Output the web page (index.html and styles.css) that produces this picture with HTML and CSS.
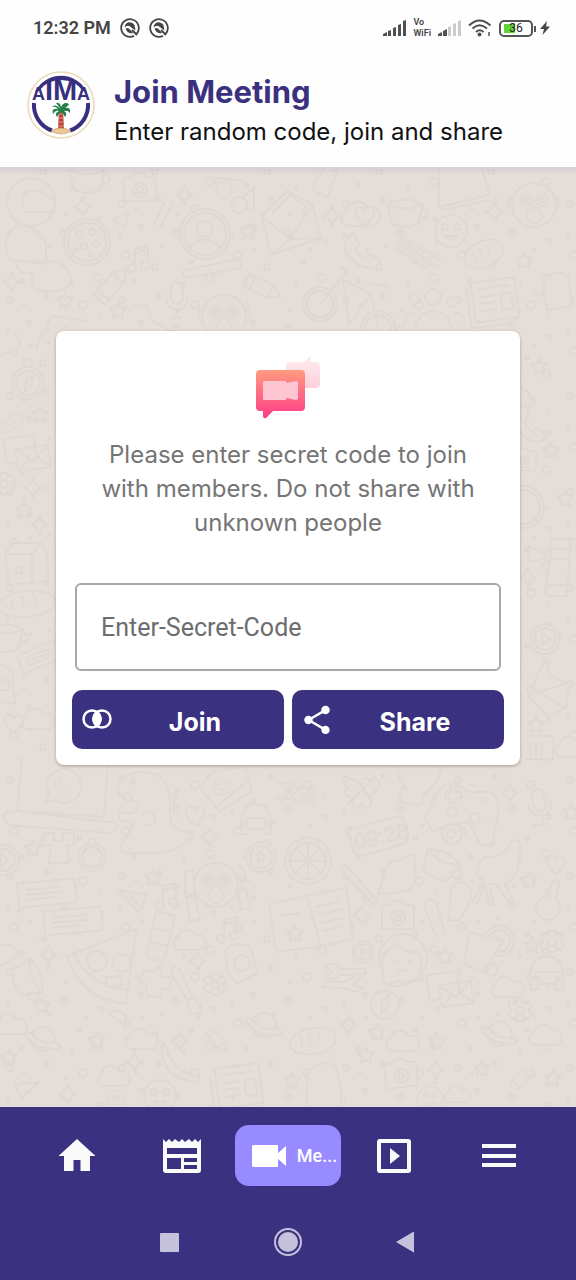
FILE: index.html
```html
<!DOCTYPE html>
<html lang="en">
<head>
<meta charset="utf-8">
<meta name="viewport" content="width=device-width, initial-scale=1">
<title>Join Meeting</title>
<link rel="stylesheet" href="styles.css">
</head>
<body>
<header class="top">
  <div class="status">
    <div class="status-left">
      <span class="clock">12:32 PM</span>
      <svg class="badge" viewBox="0 0 20 20"><path d="M16.5 16A8.800 8.800 0 1 0 14 17.900" fill="none" stroke="#444" stroke-width="1.800"/><path d="M4.500 9.500C5 4 11 2.500 14.500 7L15.500 12.500L12 10Q8 6 4.500 9.500ZM5.500 10.500Q8 9 10 11.500L13 15Q8 16.500 5.500 10.500Z" fill="#444"/><path d="M12 12l5 5" stroke="#444" stroke-width="2"/></svg>
      <svg class="badge" viewBox="0 0 20 20"><path d="M16.5 16A8.800 8.800 0 1 0 14 17.900" fill="none" stroke="#444" stroke-width="1.800"/><path d="M4.500 9.500C5 4 11 2.500 14.500 7L15.500 12.500L12 10Q8 6 4.500 9.500ZM5.500 10.500Q8 9 10 11.500L13 15Q8 16.500 5.500 10.500Z" fill="#444"/><path d="M12 12l5 5" stroke="#444" stroke-width="2"/></svg>
    </div>
    <div class="status-right">
      <svg class="signal" viewBox="0 0 23 16" fill="#505050"><path d="M0 16v-2l4-2v4zM5 16v-5l3-1v6zM10 16V8l3-1v9zM15 16V5l3-1v12zM20 16V1l3-1v16z"/></svg>
      <span class="vowifi"><span>Vo</span><span>WiFi</span></span>
      <svg class="signal" viewBox="0 0 23 16" fill="#505050"><path d="M0 16v-2l4-2v4zM5 16v-5l4-2v7z"/><path fill="#ccc" d="M10 16V7l3-1v10zM15 16V4l3-1v13zM20 16V1l3-1v16z"/></svg>
      <svg class="wifi" viewBox="0 0 24 18" fill="none" stroke="#505050" stroke-width="2"><path d="M1 6.500Q11.500-3.500 22.500 6.500M4.500 9.500Q11.500 3 19 9.500M8 13Q11.500 9.500 15.500 13"/><circle cx="11.500" cy="15.500" r="1" fill="#505050"/><path d="M21 13v4" stroke-width="1.500"/></svg>
      <span class="battery"><span class="level">36</span></span>
      <svg class="bolt" viewBox="0 0 10 14"><path fill="#444" d="M7 0L0 8h4L2.500 14L10 5.500H6z"/></svg>
    </div>
  </div>
  <div class="brand">
    <svg class="logo" viewBox="0 0 68 68" role="img" aria-label="AIMA">
      <circle cx="34" cy="34" r="33" fill="#fff" stroke="#ead9b8" stroke-width="1.500"/>
      <path d="M7 32A27 27 0 0 0 25 59.500M61 32A27 27 0 0 1 43 59.500" fill="none" stroke="#38307f" stroke-width="4"/>
      <path d="M8 21A29 29 0 0 1 60 21L56 20Q48 9 34 9Q20 9 12 20Z" fill="#38307f"/>
      <text class="logo-text" x="34" y="29" text-anchor="middle"><tspan class="logo-small">A</tspan>IM<tspan class="logo-small">A</tspan></text>
      <path d="M32 39h4l1 20h-6z" fill="#b5443c"/>
      <path d="M31 43h5M31 47h5M31 51h5M31 55h6" stroke="#e79a80" stroke-width="1"/>
      <path d="M34 38Q28 32 25 36Q29 35 31 38Q24 37 26 43Q29 38 32 40Q27 42 30 46Q32 42 34 41Q37 43 38 46Q41 42 37 40Q41 39 43 42Q44 36 38 37Q42 34 42 33Q37 30 34 36Q33 31 29 32Z" fill="#23804a"/>
      <path d="M24 60Q34 54 44 60Q34 66 24 60Z" fill="#edc898" stroke="#cc945c" stroke-width=".7"/>
    </svg>
    <div>
      <h1 class="title">Join Meeting</h1>
      <p class="subtitle">Enter random code, join and share</p>
    </div>
  </div>
</header>

<main class="content">
  <svg class="wallpaper" viewBox="0 169 576 938" preserveAspectRatio="xMidYMin slice" aria-hidden="true">
    <defs>
      <pattern id="bits" width="112" height="96" patternUnits="userSpaceOnUse">
        <g class="line">
          <circle cx="10" cy="12" r="3"/><circle cx="47" cy="8" r="2"/><circle cx="83" cy="17" r="4"/><circle cx="29" cy="34" r="2"/><circle cx="64" cy="41" r="3"/><circle cx="101" cy="49" r="2"/><circle cx="14" cy="63" r="4"/><circle cx="43" cy="75" r="3"/><circle cx="79" cy="70" r="2"/><circle cx="98" cy="86" r="4"/><circle cx="22" cy="89" r="2"/>
        </g>
        <g class="dot"><circle cx="24" cy="17" r="2"/><circle cx="66" cy="22" r="2"/><circle cx="99" cy="27" r="2"/><circle cx="8" cy="43" r="2"/><circle cx="49" cy="55" r="2"/><circle cx="87" cy="57" r="2"/><circle cx="31" cy="58" r="2"/><circle cx="72" cy="92" r="2"/></g>
      </pattern>
      <g id="star"><path d="M0-8l2 5 6 1-4 4 1 6-5-3-5 3 1-6-4-4 6-1z"/></g>
      <g id="spark"><path d="M0-10q1 8 8 10q-7 2-8 10q-2-8-9-10q7-3 9-10z"/></g>
      <g id="cloud"><path d="M-12 9a7 7 0 0 1 0-13a9 9 0 0 1 17-2a8 8 0 0 1 6 15z"/></g>
      <g id="planet"><circle r="12"/><path d="M-11-5Q-22-10-17-2Q-4 12 14 10Q22 8 11 3M-11-5Q0 7 11 3"/></g>
      <g id="gear"><circle r="4"/><path d="M-3-11h6l1 4 4-2 4 5-4 3 4 4-4 5-4-2-1 4h-6l-1-4-4 2-4-5 4-4-4-3 4-5 4 2z"/><circle r="4"/></g>
      <g id="camera"><path d="M-16-9q0-2 2-2h6l3-4h9l3 4h7q2 0 2 2v20q0 2-2 2h-28q-2 0-2-2z"/><circle cy="2" r="7"/><circle cy="2" r="3"/></g>
      <g id="mic"><rect x="-6" y="-17" width="12" height="22" rx="6"/><path fill="none" d="M-11-3q0 13 11 13t11-13M0 10v9M-5 19h10"/></g>
      <g id="envelope"><path d="M-18-12h36v25h-36zM-18-12L0 4l18-16M-18 13l13-13M18 13L5 0"/></g>
      <g id="pair"><path d="M-25-20h34v28h-34z"/><use href="#envelope" x="5" y="5"/></g>
      <g id="ring"><circle r="15"/><circle r="11"/><path d="M-3-6l8 6-8 6z"/></g>
      <g id="cookie"><circle r="23"/><circle r="19"/><circle cx="-8" cy="-8" r="3"/><circle cx="5" cy="-10" r="3"/><circle cx="9" cy="2" r="3"/><circle cx="-3" cy="4" r="3"/><circle cx="-11" cy="8" r="2"/><circle cx="4" cy="13" r="2"/></g>
      <g id="face"><circle r="16"/><circle cx="-6" cy="-4" r="3"/><circle cx="6" cy="-4" r="3"/><path d="M-6 5q6 7 12 0z"/></g>
      <g id="monkey"><circle cx="-20" cy="-2" r="6"/><circle cx="20" cy="-2" r="6"/><circle r="22"/><circle cx="-8" cy="-5" r="6"/><circle cx="8" cy="-5" r="6"/><circle cy="10" r="8"/><circle cx="-8" cy="-5" r="2"/><circle cx="8" cy="-5" r="2"/></g>
      <g id="news"><path d="M-22-20h44v40h-44zM-27-14v39h44v-5M-17-13h33M-17-5h18M-17 2h18M-17 9h18M6-5h11v16h-11z"/></g>
      <g id="pencil"><path d="M-18-7h26l12 7-12 7h-26zM-12-7v14M8-7v14"/></g>
      <g id="bubble"><path d="M-29-12h55q3 0 3 3v18q0 3-3 3h-50l-8 5q3-5 3-8zM-21-5h36M-21 0h36M-21 5h28"/></g>
      <g id="phone"><path d="M-12-16q-12 10 2 27q16 15 25 2l-9-8-6 4q-8-6-7-12l4-3-3-12z"/></g>
      <g id="car"><path d="M-15 14v-14q2-16 15-16t15 16v14h-7v-5h-16v5zM-11-2h22"/><circle cx="-10" cy="4" r="2"/><circle cx="10" cy="4" r="2"/></g>
      <g id="bread"><ellipse rx="29" ry="13"/><path d="M-16-6q4 6 0 10M-5-9q4 7 0 12M7-9q4 7 0 12"/></g>
      <g id="cup"><path d="M-17-7q18-9 36 0l-5 20q-13 6-26 0zM-17-7q18 9 36 0M18-3q10 2 3 10h-5"/></g>
      <g id="note"><path fill="none" d="M-5 8v-19l13-3v18M-5-7l13-3"/><circle cx="-8" cy="8" r="4"/><circle cx="5" cy="5" r="4"/></g>
      <g id="brush"><path d="M-3 2L-5-26q0-5 5-8q5 3 5 8l-2 28zM-4 2h8l2 12q-6 9-12 0z"/></g>
      <g id="heart"><path d="M0 9q-14-11-7-17q5-3 7 3q2-6 7-3q7 6-7 17z"/></g>
    </defs>
    <rect class="ground" x="0" y="169" width="576" height="938"/>
    <rect fill="url(#bits)" x="0" y="169" width="576" height="938"/>
    <g class="line">
      <circle cx="31" cy="202" r="24"/><path d="M22 200q2-12 17-9l15 9v12H25zM7 238q6-18 25-10l14 14v22l-35-4q-8-8-4-22zM16 261q0 14 16 12q-2 22 17 18q20 2 22-12q-5-20-27-17z"/>
      <use href="#cup" x="86" y="177"/><use href="#camera" transform="translate(140 188) rotate(-3)"/><use href="#cookie" x="87" y="242"/>
      <path d="M112 220l16-7-3 15zM153 226l12-24M160 228l13-26M217 178l28 3M222 194l-7-14M254 185v24M238 202l16-14"/><circle cx="224" cy="190" r="8"/><circle cx="239" cy="205" r="8"/>
      <circle cx="205" cy="234" r="25"/><circle cx="205" cy="234" r="21"/><circle cx="205" cy="229" r="8"/><path d="M189 248q15-17 32 0"/>
      <path d="M184 270l55-11q5 4 1 9l-53 10q-6-3-3-8zM191 272h2M199 270h2M208 269h2"/>
      <use href="#spark" x="185" y="195"/><use href="#spark" x="83" y="207"/><use href="#star" x="248" y="231"/><use href="#spark" x="12" y="282"/><use href="#note" x="140" y="260"/>
      <use href="#pencil" transform="translate(112 285) rotate(-48) scale(1.100)"/><use href="#pencil" transform="translate(263 288) rotate(25)"/><use href="#mic" x="177" y="299"/><use href="#monkey" x="224" y="317"/><use href="#star" x="118" y="310"/><use href="#star" x="65" y="300"/>
      <path d="M262 216l25-25 25 13 9 34-50 17zM262 216l28 23 22-33M272 214l18-20 17 14M271 255l19-16 31-1M45 330l6-14 36 5M139 308l8-3 5 16 20 11"/>
      <path d="M316 180l11-15 10 7-9 25-16-7zM439 170v37l51-12-8-26M440 205q0 6 9 4l40-9"/>
      <use href="#spark" x="332" y="216"/><use href="#spark" x="495" y="212"/><use href="#cloud" transform="translate(361 215) scale(1.200)"/><use href="#heart" x="365" y="216"/><use href="#cup" x="404" y="211"/><use href="#face" x="451" y="231"/><use href="#monkey" x="534" y="205"/><use href="#phone" transform="translate(363 250) rotate(-10)"/><use href="#bread" transform="translate(484 254) rotate(-25) scale(.7 1)"/><use href="#star" x="524" y="260"/>
      <text class="scribble" transform="translate(393 249) rotate(31)">BFF</text>
      <circle cx="320" cy="304" r="17"/><circle cx="320" cy="304" r="13"/><circle cx="378" cy="328" r="17"/><circle cx="378" cy="328" r="13"/><path fill="none" d="M320 304l27-33-8-5M343 280l28 14-22 31zM371 294l7 34M370 284l18 2"/>
      <use href="#news" transform="translate(495 300) rotate(-8)"/><circle cx="433" cy="297" r="8"/><circle cx="414" cy="299" r="5"/><circle cx="452" cy="302" r="5"/><path d="M415 330q3-19 18-19t19 19M405 325q-2-13 10-12M464 325q2-13-10-12"/><path d="M546 278q10-9 22-2l4 30-25 4-4-24zM533 292l12 5"/>
      <circle cx="28" cy="383" r="16"/><circle cx="28" cy="383" r="12"/><path d="M25 391l1-11 7-5-2 11zM24 366v-7h8v7M0 355q20-6 20-10t-5-12M37 350q0-16 12-20"/><use href="#star" x="40" y="414"/><use href="#bread" transform="translate(10 424) rotate(-35) scale(.5)"/><use href="#pair" transform="translate(28 454) rotate(-8) scale(.9)"/><use href="#gear" x="4" y="484"/><use href="#spark" x="33" y="488"/><use href="#star" x="24" y="510"/><use href="#spark" x="40" y="525"/>
      <path d="M5 554l8-11h28l6 12 1 26-39 4zM5 554h27l9-11M32 554v29M16 567h6v6h-6z"/><use href="#bread" transform="translate(27 604) rotate(-6)"/><use href="#cup" x="4" y="636"/><use href="#bubble" transform="translate(42 656) rotate(-22) scale(.8)"/><path d="M0 665l12 5 3 34-15-2M2 680h7v10h-7"/><use href="#cloud" x="38" y="720"/><use href="#heart" x="14" y="724"/>
      <use href="#star" x="539" y="366"/><circle cx="519" cy="400" r="12"/><use href="#phone" x="532" y="423"/><use href="#camera" transform="translate(523 460) scale(.8)"/><use href="#star" x="551" y="450"/><use href="#star" x="565" y="498"/><circle cx="523" cy="507" r="21"/><circle cx="523" cy="507" r="17"/><path d="M551 539h19v11l-3 46h-19l-3-3 6-43zM551 549h18M550 559h17M548 585h18M528 546l16 7 8-8-8 14-15 3z"/><use href="#spark" x="528" y="578"/><use href="#ring" x="545" y="639"/><path d="M538 673l8-12 4 15 18 8-1 22-18 11-20-20zM530 695l37-12M534 688l30 20"/><use href="#star" x="536" y="724"/><path d="M524 736h29v23h-29M530 742v14M536 742v14M542 742v14"/><use href="#cloud" x="572" y="748"/>
      <path d="M22 758l-5 53 87 6 4-54M17 811L2 814l6 11 102 8q9-2 6-10z"/><circle cx="64" cy="786" r="17"/><path d="M51 793l-5 9 11-2"/><use href="#phone" transform="translate(63 785) scale(.5)"/>
      <path d="M119 795q-5-18 18-23q35-2 33 33q-3 30 22 27q-9 23-44 21h-24q-7-8 2-15l8-15-15-3v-7h15l5-9zM173 786l4 5-4 4 4 4-4 4 4 4-4 4 5 7M141 815q8-7 13 1t-10 10"/><circle cx="128" cy="797" r="4"/><circle cx="133" cy="782" r="2"/>
      <path d="M200 787l13-16 32-4 7 24-33 21zM214 808l35-28"/><use href="#face" transform="translate(222 786) scale(.55)"/><use href="#heart" x="195" y="816"/><use href="#car" x="256" y="820"/><use href="#ring" x="261" y="857"/><use href="#ring" x="4" y="860"/><use href="#star" x="33" y="848"/><path d="M44 833h10v8h9v-8h11v12h-7l2 18H49l2-18h-7z"/><circle cx="92" cy="857" r="14"/><circle cx="92" cy="857" r="10"/><circle cx="92" cy="842" r="4"/>
      <use href="#bubble" transform="translate(47 893) rotate(-5)"/><use href="#bubble" transform="translate(73 921) rotate(-5)"/><path d="M119 890l28 5-8 18zM129 894l10 12"/><use href="#star" x="153" y="877"/><use href="#spark" x="210" y="837"/><use href="#monkey" x="216" y="885"/><path d="M185 871h8l2 25-10-2zM186 897h9l5 22-10 2zM238 864q8 5 7 18l-8-7M238 893l7-6 6 21-10 1z"/>
      <path d="M67 956l69-27-10 74q-45-2-59-47zM74 954q16 32 52 36"/><circle cx="97" cy="961" r="10"/><circle cx="122" cy="963" r="9"/><path d="M106 977l15-1v10h-15zM156 911l19 5-10 42q-10 6-18-2zM153 928l18 4M150 942l18 4"/><use href="#cloud" x="190" y="941"/><use href="#note" x="168" y="897"/><use href="#note" x="229" y="931"/><path d="M144 971h10l2-4q10 3 4 10h10v12h-9l-1 8-13-1-1-12-8-2z"/><use href="#brush" transform="translate(189 997) rotate(-28)"/><use href="#spark" x="198" y="961"/><use href="#gear" x="215" y="985"/><path d="M225 951q8-11 25-4l8 26-21 11-9-12z"/><circle cx="242" cy="963" r="8"/><use href="#spark" x="49" y="955"/><use href="#cup" transform="translate(29 977) rotate(70)"/><path d="M0 945q20-1 16 12L0 966"/>
      <use href="#star" x="42" y="1005"/><use href="#cloud" x="11" y="1025"/><use href="#planet" x="43" y="1039"/><use href="#star" x="97" y="1040"/><use href="#cloud" x="142" y="1040"/><use href="#star" x="9" y="1057"/><use href="#spark" x="135" y="1062"/><use href="#spark" x="180" y="1041"/><use href="#cloud" x="114" y="1077"/><path d="M162 1042q-3 37 35 40l2-5q-27-5-33-31zM15 1084l24-2-18 16zM111 1016q4-12 15 0v10z"/><use href="#face" x="160" y="1096"/><use href="#spark" x="68" y="1094"/><use href="#news" transform="translate(239 1086) rotate(-8)"/><use href="#planet" x="264" y="1025"/><use href="#pencil" transform="translate(218 1040) rotate(50) scale(.7)"/><use href="#camera" transform="translate(116 1098) scale(.5)"/>
      <text class="scribble" transform="translate(276 798) rotate(12)">文A</text><use href="#heart" x="370" y="787"/><use href="#heart" transform="translate(354 788) rotate(-90)"/><use href="#heart" transform="translate(362 799) rotate(180)"/><path d="M347 805l20-20M397 762q0 17 9 26l-6 2v12l22 3 2-11q18-12 16-29"/>
      <path d="M425 819q6-20 19-34 12-5 24 7h22q9 3 8 20l-5 29q-12 11-17-5t-15-13q-18 3-28 9zM446 792h5v-5h5v5h5v6h-5v5h-6v-5h-5z"/><circle cx="475" cy="818" r="5"/><circle cx="483" cy="800" r="2"/><circle cx="452" cy="812" r="5"/>
      <path d="M349 833q0-4 5-5l42-11q8 0 10 7l2 13q0 5-5 7l-38 11q-11 1-12-5z"/><text class="clock-doodle" transform="translate(356 850) rotate(-13)">09:28</text>
      <circle cx="308" cy="861" r="23"/><circle cx="308" cy="861" r="18"/><path d="M308 843v36M290 861h36M295 848l26 26M321 848l-26 26"/><path d="M340 869l34 36 3-4-32-37z"/><circle cx="400" cy="876" r="16"/><path d="M387 866l-6 19-3 9 20-1M400 860l15-6v20"/><use href="#cup" transform="translate(440 863) rotate(25)"/><circle cx="452" cy="834" r="10"/><circle cx="451" cy="834" r="4"/><path d="M477 875q2-21 14-18 14 0 20-15 10-6 9 6l-2 20q-3 12-13 15l8 18-3 3-14-20h-6l3 21h-4l-5-22-6 20-5-1 10-21z"/><use href="#mic" transform="translate(540 806) rotate(-10)"/><use href="#star" x="571" y="812"/><use href="#spark" x="510" y="793"/><use href="#star" x="529" y="880"/><use href="#heart" x="556" y="865"/><circle cx="548" cy="908" r="12"/><path d="M547 898l6-17 7 1-5 19"/>
      <path d="M269 904l38-8 39-8 7 51-34 8-43 5zM307 896l14 51M316 907l24-6M317 915l25-6M319 923l24-5M323 931l17-4M280 915l20-2"/><use href="#star" x="295" y="933"/><use href="#camera" x="398" y="916"/><use href="#spark" x="362" y="915"/><path d="M424 905q3-9 12-3l9 31q-4 6-10 1zM450 904q-2-21 12-22 14 4 7 22l-9 16h-11z"/><use href="#ring" transform="translate(363 952) scale(.7)"/><use href="#ring" transform="translate(499 941)"/><path d="M470 932l33 9-20 31-19-8z"/><use href="#star" x="532" y="945"/><use href="#gear" x="552" y="942"/>
      <circle cx="403" cy="958" r="24"/><path d="M386 985q-5-6-2-17-6-15 13-24 6 8 22 9 4 8 2 16 0 6-4 10-8 8-18 2zM386 985q20 4 30-6"/><path d="M393 961h4M408 961h4M397 969q5 4 9 0"/><use href="#star" x="445" y="956"/><path d="M325 965q13-4 15 4h25l1 5-27 1q-7 8-14 1l7-4zM324 982h22q7-8 13-2l-7 5 12 3q-9 6-15 1l-24-2z"/><use href="#pair" transform="translate(451 990) rotate(-8) scale(.9)"/><use href="#cloud" x="508" y="988"/><path d="M493 962q8 10 0 13t-5-5z"/><use href="#car" transform="translate(547 974) scale(1.100)"/><circle cx="385" cy="1005" r="14"/><path d="M381 1013l1-12 7-6-2 12z"/><use href="#gear" x="520" y="1011"/><use href="#spark" x="349" y="1025"/><use href="#star" x="377" y="1032"/><use href="#star" x="437" y="1041"/><use href="#cloud" x="403" y="1042"/><use href="#bread" transform="translate(313 1041) rotate(-9) scale(.8 1)"/><use href="#planet" x="500" y="1034"/><use href="#cloud" x="546" y="1036"/><use href="#star" x="366" y="1055"/><use href="#camera" transform="translate(401 1074) rotate(-5)"/><use href="#spark" x="436" y="1070"/><use href="#star" x="482" y="1068"/><use href="#pencil" transform="translate(522 1078) rotate(-45) scale(.7)"/><use href="#star" x="553" y="1078"/><path d="M306 1107l2-33q8-15 26-9 8 13 7 42"/><use href="#face" transform="translate(430 1099) scale(.8)"/><use href="#cloud" transform="translate(458 1095) scale(.8)"/><use href="#star" x="292" y="1081"/>
    </g>
  </svg>

  <form class="card">
    <svg class="card-icon" viewBox="0 0 64 64" aria-hidden="true">
      <defs>
        <linearGradient id="hot" x1="0" y1="0" x2="0" y2="1"><stop offset="0" stop-color="#ff9b80"/><stop offset="1" stop-color="#fc3c86"/></linearGradient>
        <linearGradient id="pale" x1="0" y1="0" x2="0" y2="1"><stop offset="0" stop-color="#ffeeee"/><stop offset="1" stop-color="#fed0dc"/></linearGradient>
      </defs>
      <path fill="url(#pale)" d="M34 7h14l7-7v7h5q4 0 4 4v18q0 4-4 4H34q-4 0-4-4V11q0-4 4-4z"/>
      <path fill="url(#hot)" d="M4 15h41q4 0 4 4v33q0 4-4 4H17l-7 7q-3 1-3-2v-5H4q-4 0-4-4V19q0-4 4-4z"/>
      <path fill="#fec6d2" d="M8 26h21q1 0 2 2l9-2q2 0 2 2v15q0 2-2 2l-9-2q-1 2-2 2H8q-1 0-1-1V27q0-1 1-1z"/>
    </svg>
    <p class="prompt">Please enter secret code to join with members. Do not share with unknown people</p>
    <input class="code" type="text" placeholder="Enter-Secret-Code" aria-label="Enter-Secret-Code">
    <div class="actions">
      <button class="action" type="button">
        <svg viewBox="0 0 34 34" fill="none" stroke="#fff" stroke-width="2.500"><circle cx="12" cy="16" r="8.500"/><circle cx="22" cy="16" r="8.500"/><path d="M17 9q-7 7 0 14q7-7 0-14z" fill="#fff"/></svg>
        <span>Join</span>
      </button>
      <button class="action" type="button">
        <svg viewBox="0 0 24 24" fill="#fff"><path d="M18 16.080c-.76 0-1.440.3-1.960.77L8.910 12.700c.05-.23.09-.46.09-.7s-.04-.47-.09-.7l7.050-4.110c.54.5 1.250.81 2.040.81 1.660 0 3-1.340 3-3s-1.340-3-3-3-3 1.340-3 3c0 .24.04.47.09.7L8.040 9.810C7.500 9.310 6.790 9 6 9c-1.660 0-3 1.340-3 3s1.340 3 3 3c.79 0 1.500-.31 2.040-.81l7.120 4.160c-.05.21-.08.43-.08.65 0 1.610 1.310 2.920 2.920 2.920s2.920-1.310 2.920-2.920-1.310-2.920-2.920-2.920z"/></svg>
        <span>Share</span>
      </button>
    </div>
  </form>
</main>

<footer class="bottom">
  <nav class="tabs">
    <a class="tab" href="#home" aria-label="Home"><svg viewBox="0 0 40 40" fill="#fafafa"><path d="M20 3L1.500 20H7v15h9.500V24h7v11H33V20h5.500z"/></svg></a>
    <a class="tab" href="#news" aria-label="News"><svg viewBox="0 0 40 40" fill="#fafafa"><path fill-rule="evenodd" d="M1 3l3 3 3-3 3 3 3-3 4 3 3-3 3 3 4-3 3 3 3-3 3 3 3-3v31q0 3-3 3H4q-3 0-3-3zM5 12v6h30v-6zM5 22v11h14V22zM22 22v4h13v-4zM22 29v4h13v-4z"/></svg></a>
    <a class="tab active" href="#meeting" aria-current="page" aria-label="Meeting"><svg viewBox="0 0 40 40" fill="#fff"><path d="M5 9h23q1 0 1 1v7l8-7v20l-8-7v7q0 1-1 1H5q-2 0-2-1V10q0-1 2-1z"/></svg><span>Me...</span></a>
    <a class="tab" href="#videos" aria-label="Videos"><svg viewBox="0 0 40 40" fill="#fafafa"><path fill-rule="evenodd" d="M6 3h28q3 0 3 3v28q0 3-3 3H6q-3 0-3-3V6q0-3 3-3zM7 7v26h26V7zM16 12l10 8-10 8z"/></svg></a>
    <a class="tab" href="#menu" aria-label="Menu"><svg viewBox="0 0 40 40" fill="#fafafa"><path d="M3 8h34v4H3zM3 18h34v4H3zM3 27h34v4H3z"/></svg></a>
  </nav>
  <div class="system">
    <button class="key" type="button" aria-label="Recent apps"><svg viewBox="0 0 28 28"><rect x="4" y="5" width="19" height="19" rx="1" fill="#c6c2db"/></svg></button>
    <button class="key" type="button" aria-label="Home screen"><svg viewBox="0 0 28 28"><circle cx="14" cy="14" r="13" fill="none" stroke="#c6c2db" stroke-width="2"/><circle cx="14" cy="14" r="10" fill="#c6c2db"/></svg></button>
    <button class="key" type="button" aria-label="Back"><svg viewBox="0 0 28 28"><path d="M22 4v20q0 1-1 0L4 14 21 4z" fill="#c6c2db"/></svg></button>
  </div>
</footer>
</body>
</html>
```

FILE: styles.css
```css
* { box-sizing: border-box; }
body {
  margin: 0;
  min-height: 100vh;
  display: flex;
  flex-direction: column;
  font-family: Inter, "Noto Sans", sans-serif;
  background: #e5ddd8;
}
svg { display: block; }

.top {
  position: relative;
  z-index: 1;
  background: #fefefe;
  border-bottom: 2px solid #d5d3d5;
  box-shadow: 0 2px 4px rgba(150, 145, 160, 0.2);
}
.status {
  height: 56px;
  padding: 0 26px 0 33px;
  display: flex;
  align-items: center;
  justify-content: space-between;
}
.status-left, .status-right { display: flex; align-items: center; }
.status-left { gap: 9px; }
.status-right { gap: 7px; }
.clock {
  font: 600 18px/24px Roboto, sans-serif;
  color: #444;
}
.badge { width: 20px; height: 20px; }
.signal { width: 23px; height: 16px; }
.wifi { width: 24px; height: 18px; }
.bolt { width: 10px; height: 14px; }
.vowifi {
  display: flex;
  flex-direction: column;
  font: 600 9px/11px Roboto, sans-serif;
  color: #444;
}
.battery {
  position: relative;
  width: 34px;
  height: 17px;
  border: 2px solid #555;
  border-radius: 5px;
  background: linear-gradient(90deg, #63d236 0 11px, #fff 11px) 3px 2px / 24px 9px no-repeat;
}
.battery::after {
  content: "";
  position: absolute;
  right: -5px;
  top: 4px;
  width: 2px;
  height: 6px;
  background: #555;
}
.level {
  display: block;
  text-align: center;
  font: 400 12px/13px Roboto, sans-serif;
  color: #222;
}

.brand {
  display: flex;
  align-items: flex-start;
  gap: 19px;
  padding: 15px 27px;
}
.logo { width: 68px; height: 68px; flex: none; }
.logo-text {
  font: 700 29px "Liberation Sans", sans-serif;
  fill: #38307f;
}
.logo-small { font-size: 18px; }
.title {
  margin: 0;
  font-size: 31px;
  line-height: 41px;
  font-weight: 700;
  color: #3a307f;
}
.subtitle {
  margin: 0;
  font-size: 24px;
  line-height: 40px;
  color: #111;
}

.content {
  position: relative;
  flex: 1;
  padding: 162px 56px;
  overflow: hidden;
}
.wallpaper {
  position: absolute;
  inset: 0;
  width: 100%;
  height: 100%;
}
.ground { fill: #e5ddd8; }
.line { fill: #e5ddd8; stroke: #dfd7d2; stroke-width: 2; stroke-linejoin: round; }
.dot { fill: #dfd7d2; }
.scribble { font: 700 24px "Liberation Sans", "Noto Sans CJK SC", sans-serif; stroke-width: 1; }
.clock-doodle { font: 400 22px "Liberation Sans", sans-serif; stroke-width: 1; }

.card {
  position: relative;
  padding: 24px 16px 16px;
  background: #fff;
  border-radius: 8px;
  box-shadow: 0 1px 3px rgba(70, 60, 60, 0.4);
}
.card-icon { width: 64px; height: 64px; margin: 0 auto; }
.prompt {
  margin: 19px 16px 43px;
  text-align: center;
  font-size: 24px;
  line-height: 34px;
  color: #757575;
}
.code {
  display: block;
  width: calc(100% - 6px);
  height: 88px;
  margin: 0 auto 19px;
  padding: 0 24px;
  border: 2px solid #a8a8a8;
  border-radius: 6px;
  background: #fff;
  font: 400 25px Roboto, sans-serif;
  color: #222;
}
.code::placeholder { color: #6d6d6d; opacity: 1; }
.actions {
  display: grid;
  grid-template-columns: 1fr 1fr;
  gap: 8px;
}
.action {
  height: 59px;
  padding: 0 8px;
  display: grid;
  grid-template-columns: 34px 1fr;
  align-items: center;
  border: 0;
  border-radius: 10px;
  background: #3a3180;
  color: #fff;
  font: 700 25px/32px Inter, sans-serif;
}
.action svg { width: 34px; height: 34px; }
.action span { padding-top: 4px; }

.bottom { background: #3a3180; }
.tabs {
  display: grid;
  grid-template-columns: repeat(5, 1fr);
  padding: 18px 24px;
}
.tab {
  min-width: 0;
  height: 61px;
  display: flex;
  align-items: center;
  justify-content: center;
  border-radius: 14px;
  color: #fff;
  text-decoration: none;
}
.tab svg { width: 40px; height: 40px; flex: none; }
.tab.active {
  gap: 8px;
  padding: 0 5px 0 15px;
  background: #978bff;
}
.tab span {
  white-space: nowrap;
  font: 500 18px/24px Roboto, sans-serif;
}
.system {
  display: flex;
  justify-content: center;
  gap: 90px;
  padding: 24px 0;
}
.key { padding: 0; border: 0; background: none; }
.key svg { width: 28px; height: 28px; }
```
